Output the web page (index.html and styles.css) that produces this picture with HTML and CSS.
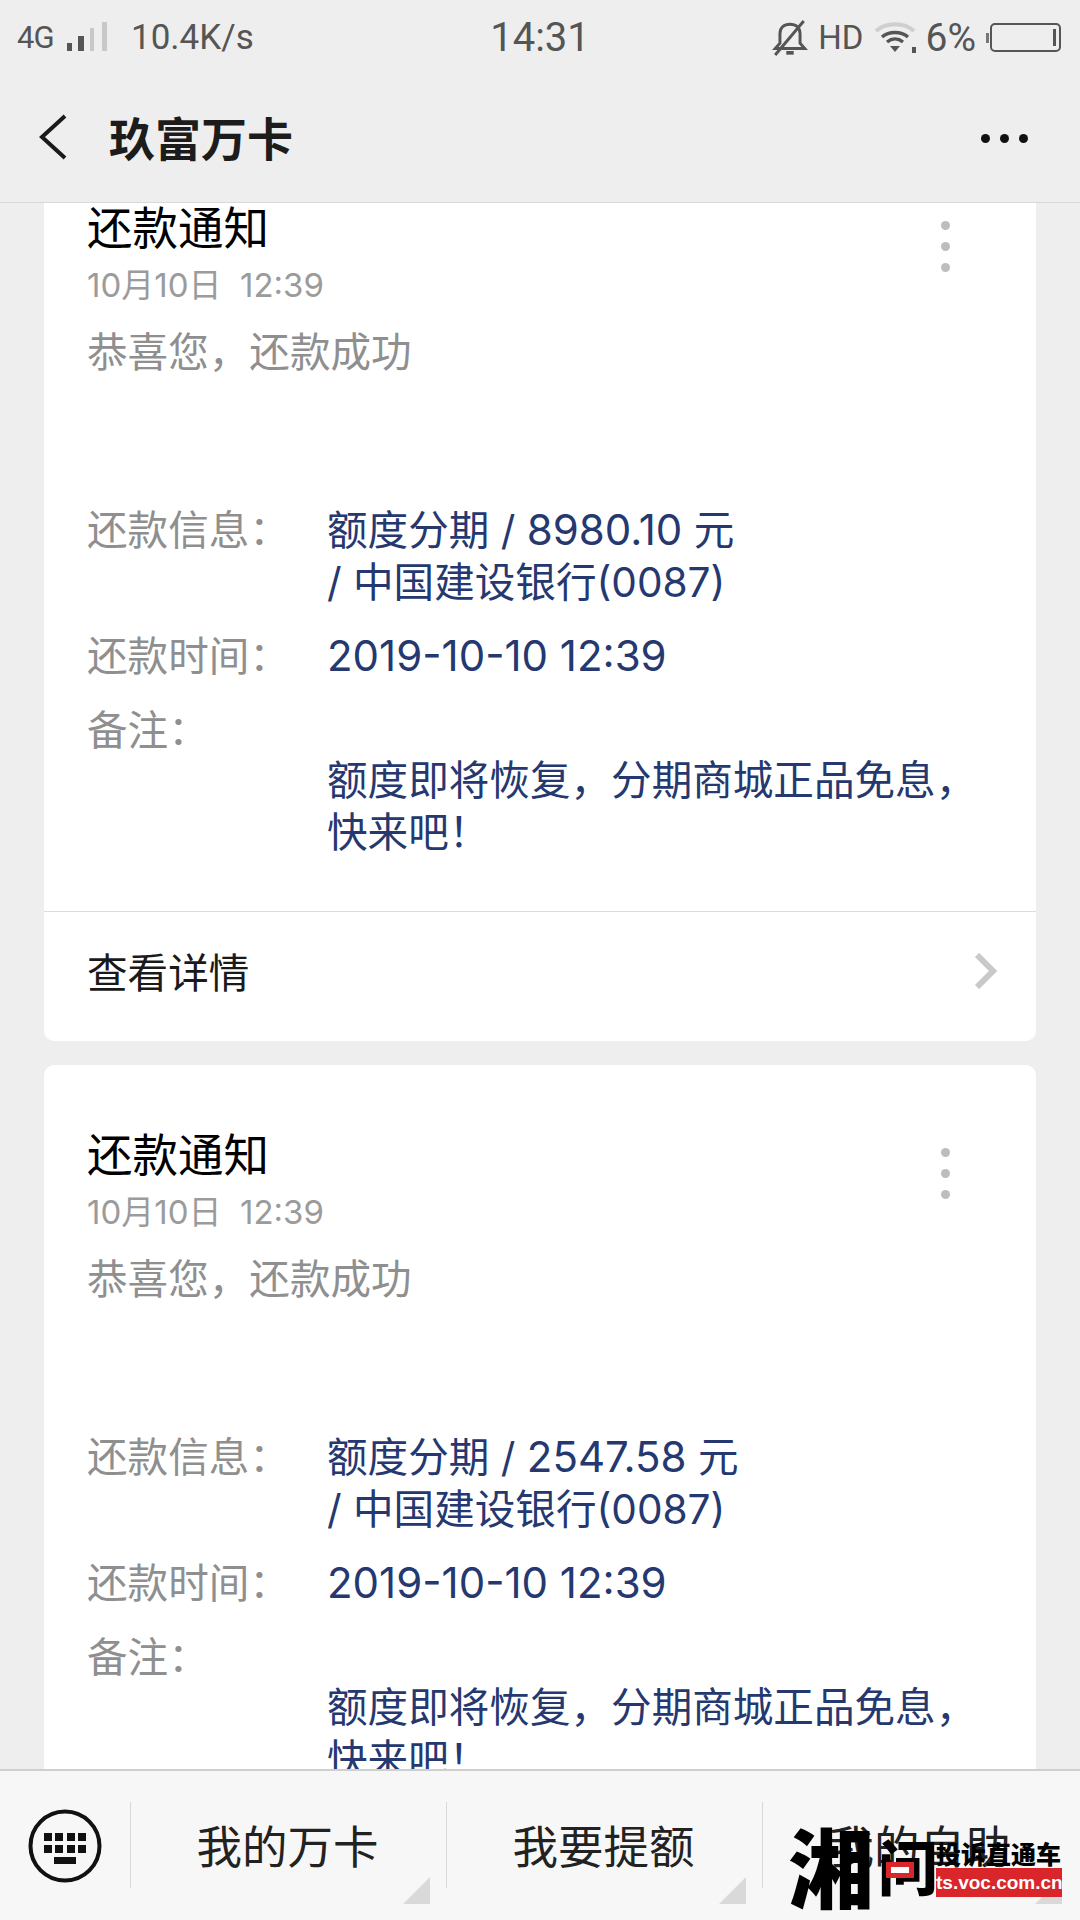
FILE: index.html
```html
<!DOCTYPE html>
<html lang="zh-CN">
<head>
<meta charset="utf-8">
<title>玖富万卡</title>
<link rel="stylesheet" href="styles.css">
</head>
<body>
<div class="screen">
  <header class="top">
    <div class="status">
      <div class="status-left">
        <span class="net">4G</span>
        <svg class="signal" width="40" height="29" viewBox="0 0 40 29"><rect x="0" y="21" width="5" height="8" fill="#555"/><rect x="11" y="14" width="6" height="15" fill="#555"/><rect x="23" y="6" width="4" height="23" fill="#c8c8c8"/><rect x="35" y="0" width="5" height="29" fill="#c8c8c8"/></svg>
        <span class="speed">10.4K/s</span>
      </div>
      <div class="clock">14:31</div>
      <div class="status-right">
        <svg class="bell" width="36" height="36" viewBox="0 0 34 34" fill="none" stroke="#555" stroke-width="2.8"><path d="M3 27h28l-4.500-5V13C26.500 7 22.500 4 17 4S7.500 7 7.500 13v9z"/><path d="M13.500 31h7" stroke-width="3.500"/><path d="M30 1 3 33"/></svg>
        <span class="hd">HD</span>
        <svg class="wifi" width="44" height="32" viewBox="0 0 44 32" fill="none"><path d="M2 9C12 0 30 0 40 9" stroke="#cfcfcf" stroke-width="4"/><path d="M8 15C15 9 27 9 34 15" stroke="#555" stroke-width="3.500"/><path d="M13 20c5-4 11-4 16 0" stroke="#555" stroke-width="3.500"/><path d="M16 24h10l-5 6z" fill="#555"/><rect x="38" y="25" width="4" height="6" fill="#555"/></svg>
        <span class="pct">6%</span>
        <div class="battery-wrap"><span class="nub"></span><div class="battery"><span class="cap"></span></div></div>
      </div>
    </div>
    <div class="nav">
      <div class="nav-left">
        <svg class="back" width="30" height="46" viewBox="0 0 30 46" fill="none" stroke="#1a1a1a" stroke-width="4"><path d="M27 2 4 23l23 21"/></svg>
        <h1 class="nav-title">玖富万卡</h1>
      </div>
      <div class="more"><i></i><i></i><i></i></div>
    </div>
  </header>

  <main class="feed">
    <div class="list">
      <article class="card">
        <div class="head">
          <div>
            <h2 class="title">还款通知</h2>
            <div class="date">10月10日&nbsp;&nbsp;12:39</div>
          </div>
          <div class="menu"><i></i><i></i><i></i></div>
        </div>
        <p class="greet">恭喜您，还款成功</p>
        <div class="row first"><span class="label">还款信息：</span><span class="value">额度分期 / <span class="num">8980.10</span> 元<br>/ 中国建设银行(0087)</span></div>
        <div class="row"><span class="label">还款时间：</span><span class="value"><span class="num">2019-10-10 12:39</span></span></div>
        <div class="row note"><span class="label">备注：</span></div>
        <div class="row"><span class="label"></span><span class="value">额度即将恢复，分期商城正品免息，<br>快来吧！</span></div>
        <div class="foot">
          <span>查看详情</span>
          <svg class="chev" width="24" height="36" viewBox="0 0 24 36" fill="none" stroke="#c9c9c9" stroke-width="6"><path d="M3 2l16 16L3 34"/></svg>
        </div>
      </article>
      <article class="card">
        <div class="head">
          <div>
            <h2 class="title">还款通知</h2>
            <div class="date">10月10日&nbsp;&nbsp;12:39</div>
          </div>
          <div class="menu"><i></i><i></i><i></i></div>
        </div>
        <p class="greet">恭喜您，还款成功</p>
        <div class="row first"><span class="label">还款信息：</span><span class="value">额度分期 / <span class="num">2547.58</span> 元<br>/ 中国建设银行(0087)</span></div>
        <div class="row"><span class="label">还款时间：</span><span class="value"><span class="num">2019-10-10 12:39</span></span></div>
        <div class="row note"><span class="label">备注：</span></div>
        <div class="row"><span class="label"></span><span class="value">额度即将恢复，分期商城正品免息，<br>快来吧！</span></div>
      </article>
    </div>
  </main>

  <footer class="bar">
    <div class="kbd">
      <svg width="74" height="74" viewBox="0 0 74 74" fill="none"><circle cx="37" cy="37" r="34.500" stroke="#111" stroke-width="4"/><g fill="#111"><rect x="16" y="24" width="8" height="8"/><rect x="27" y="24" width="8" height="8"/><rect x="39" y="24" width="8" height="8"/><rect x="50" y="24" width="8" height="8"/><rect x="16" y="36" width="8" height="8"/><rect x="27" y="36" width="8" height="8"/><rect x="39" y="36" width="8" height="8"/><rect x="50" y="36" width="8" height="8"/><rect x="26" y="48" width="22" height="7"/></g></svg>
    </div>
    <div class="tab"><span>我的万卡</span><b class="tri"></b></div>
    <div class="tab"><span>我要提额</span><b class="tri"></b></div>
    <div class="tab"><span>我的自助</span><b class="tri"></b></div>
  </footer>

  <div class="logo">
    <span class="logo-xiang">湘</span>
    <span class="logo-wen">问<i></i></span>
    <div class="logo-side">
      <span class="logo-line">投诉直通车</span>
      <span class="logo-url">ts.voc.com.cn</span>
    </div>
  </div>
</div>
</body>
</html>
```
FILE: styles.css
```css
* { box-sizing: border-box; }
html, body { margin: 0; padding: 0; }
body {
  font-family: "Noto Sans CJK SC", "Noto Sans", sans-serif;
  background: #eeeeee;
}
.screen {
  position: relative;
  width: 1080px;
  height: 1920px;
  display: flex;
  flex-direction: column;
  overflow: hidden;
  background: #eeeeee;
}
.top {
  height: 203px;
  flex: none;
  background: #eeeeee;
  border-bottom: 1px solid #d9d9d9;
}
.status {
  height: 75px;
  padding: 0 19px 0 17px;
  display: grid;
  grid-template-columns: 1fr auto 1fr;
  align-items: center;
  color: #555;
  font-family: Roboto, "Noto Sans", sans-serif;
}
.status-left { display: flex; align-items: center; }
.net { font-size: 31px; width: 50px; letter-spacing: -1px; }
.signal { margin-right: 24px; margin-top: -2px; }
.speed { font-size: 35px; }
.clock { font-size: 40px; text-align: center; padding-left: 2px; }
.status-right { display: flex; align-items: center; justify-content: flex-end; }
.bell { margin-right: 10px; }
.hd { font-size: 33px; margin-right: 10px; }
.wifi { margin-right: 8px; }
.pct { font-size: 39px; margin-right: 10px; }
.battery-wrap { display: flex; align-items: center; }
.nub { width: 3px; height: 10px; background: #777; margin-right: 1px; }
.battery {
  width: 71px;
  height: 29px;
  border: 2px solid #555;
  border-radius: 5px;
  display: flex;
  justify-content: flex-end;
  padding: 4px 3px;
}
.cap { width: 3px; background: #555; }
.nav {
  height: 127px;
  padding: 0 52px 0 38px;
  display: flex;
  align-items: center;
  justify-content: space-between;
}
.nav-left { display: flex; align-items: center; gap: 41px; }
.back { margin-top: -4px; }
.nav-title { margin: -6px 0 0; font-size: 46px; line-height: 60px; font-weight: 700; color: #1c1c1c; }
.more { display: flex; gap: 10px; }
.more i { width: 9px; height: 9px; border-radius: 50%; background: #111; }

.feed { flex: 1; min-height: 0; overflow: hidden; }
.list {
  margin-top: -65px;
  padding: 0 44px;
  display: flex;
  flex-direction: column;
  gap: 24px;
}
.card {
  background: #fff;
  border-radius: 10px;
  padding-top: 65px;
  font-family: Inter, "Noto Sans CJK SC", sans-serif;
}
.head {
  display: flex;
  justify-content: space-between;
  padding: 0 86px 0 43px;
}
.title { margin: 0; font-size: 45.500px; line-height: 52px; font-weight: 400; color: #000; }
.date { margin-top: 10px; font-size: 33px; line-height: 40px; color: #9b9b9b; }
.menu { display: flex; flex-direction: column; gap: 12px; padding-top: 18px; }
.menu i { width: 9px; height: 9px; border-radius: 50%; background: #bdbdbd; }
.greet { margin: 22px 0 0; padding-left: 43px; font-size: 40.600px; line-height: 52px; color: #8f8f8f; }
.row {
  margin-top: 22px;
  padding-left: 43px;
  display: grid;
  grid-template-columns: 240px 1fr;
  font-size: 40.600px;
  line-height: 52px;
}
.row.first { margin-top: 126px; }
.row.note { line-height: 48px; margin-top: 24px; }
.row.note + .row { margin-top: 0; }
.label { color: #8f8f8f; }
.value { color: #25386f; }
.num { font-size: 42px; line-height: 1; }
.foot {
  margin-top: 52px;
  height: 130px;
  padding: 0 38px 12px 43px;
  border-top: 1px solid #dcdcdc;
  display: flex;
  align-items: center;
  justify-content: space-between;
  font-size: 40.600px;
  color: #1a1a1a;
}

.bar {
  position: relative;
  z-index: 1;
  height: 151px;
  flex: none;
  background: #f7f7f7;
  border-top: 2px solid #cfcfcf;
  display: flex;
  padding-top: 31px;
}
.kbd { width: 130px; padding: 7px 0 0 28px; flex: none; }
.tab {
  position: relative;
  width: 316px;
  height: 86px;
  flex: none;
  border-left: 1px solid #d8d8d8;
  display: flex;
  align-items: center;
  justify-content: center;
  font-size: 45.500px;
  color: #222;
}
.tab span { margin-left: -2px; margin-top: -2px; }
.tri {
  position: absolute;
  right: 16px;
  bottom: -16px;
  width: 27px;
  height: 27px;
  background: #d9d9d9;
  clip-path: polygon(100% 0, 100% 100%, 0 100%);
}

.logo {
  position: absolute;
  z-index: 2;
  left: 788px;
  top: 1820px;
  width: 274px;
  height: 90px;
  display: flex;
  color: #000;
  font-weight: 900;
}
.logo-xiang { width: 90px; flex: none; font-size: 86px; line-height: 90px; }
.logo-wen { position: relative; width: 58px; flex: none; font-size: 60px; line-height: 90px; }
.logo-wen i {
  position: absolute;
  left: 8px;
  top: 42px;
  width: 28px;
  height: 16px;
  border: 5px solid #d9262b;
  background: #fff;
}
.logo-side { width: 126px; flex: none; display: flex; flex-direction: column; padding-top: 19px; }
.logo-line { font-size: 25px; line-height: 29px; white-space: nowrap; }
.logo-url {
  height: 29px;
  background: #d9262b;
  color: #fff;
  font-family: "Liberation Sans", sans-serif;
  font-weight: 700;
  font-size: 19px;
  line-height: 29px;
  text-align: center;
  white-space: nowrap;
}
```
